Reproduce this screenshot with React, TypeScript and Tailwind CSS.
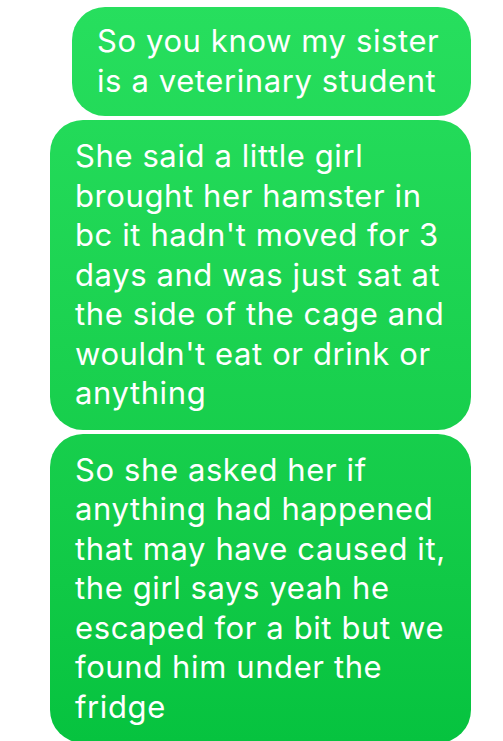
const messages: { width: string; pad: string; lines: string[] }[] = [
  {
    width: "w-[399px]",
    pad: "pt-[14px] pb-[16px]",
    lines: ["So you know my sister", "is a veterinary student"],
  },
  {
    width: "w-[421px]",
    pad: "pt-[16px] pb-[17px]",
    lines: [
      "She said a little girl",
      "brought her hamster in",
      "bc it hadn't moved for 3",
      "days and was just sat at",
      "the side of the cage and",
      "wouldn't eat or drink or",
      "anything",
    ],
  },
  {
    width: "w-[421px]",
    pad: "pt-[16px] pb-[17px]",
    lines: [
      "So she asked her if",
      "anything had happened",
      "that may have caused it,",
      "the girl says yeah he",
      "escaped for a bit but we",
      "found him under the",
      "fridge",
    ],
  },
];

export default function App() {
  return (
    <div className="h-screen overflow-hidden bg-white font-['Inter',sans-serif]">
      {/* conversation */}
      <div className="flex flex-col items-end gap-[4px] pt-[7px] pr-[32px]">
        {messages.map((m, i) => (
          <div
            key={i}
            className={`${m.width} ${m.pad} rounded-[33px] bg-linear-to-b from-[#27df5e] to-[#06c33f] bg-fixed px-[25px] text-[31px] leading-[39.5px] tracking-[0.6px] text-white`}
          >
            {m.lines.map((line, j) => (
              <div key={j} className="whitespace-nowrap">
                {line}
              </div>
            ))}
          </div>
        ))}
      </div>
    </div>
  );
}
